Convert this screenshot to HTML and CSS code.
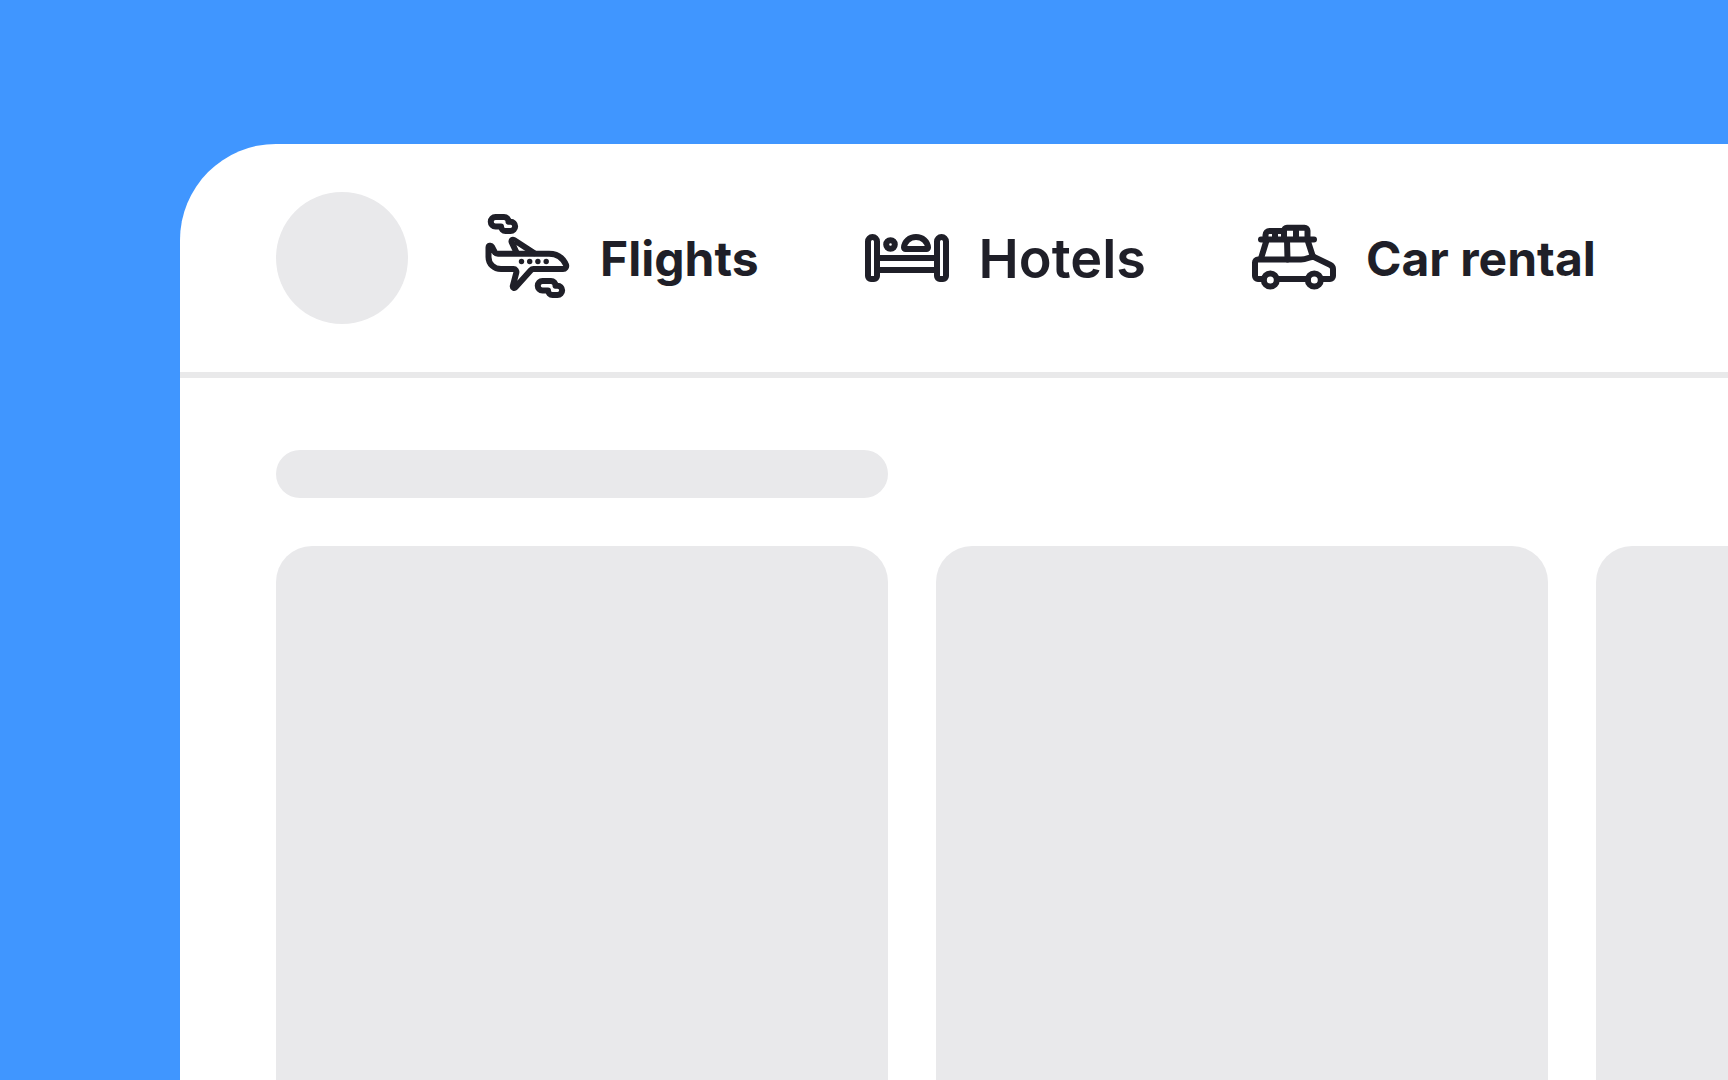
FILE: index.html
```html
<!DOCTYPE html>
<html lang="en">
<head>
    <meta charset="UTF-8">
    <meta name="viewport" content="width=device-width, initial-scale=1.0">
    <title>Travel</title>
    <link rel="stylesheet" href="styles.css">
</head>
<body>
    <div class="window">
        <header class="header">
            <div class="logo"></div>
            <nav class="nav">
                <a class="nav-link" href="#">
                    <svg class="icon" viewBox="0 0 96 96" aria-hidden="true">
                        <path d="M15.500 7h8.500a4.500 4.500 0 0 1 4.500 4.700h2a4.600 4.600 0 0 1 0 9.300h-5a4.500 4.500 0 0 1-4.500-4.500h-5.500a4.700 4.700 0 0 1 0-9.500z"/>
                        <path d="M62.500 71H71a4.500 4.500 0 0 1 4.500 4.700h2a4.600 4.600 0 0 1 0 9.300h-5a4.500 4.500 0 0 1-4.500-4.500h-5.500a4.700 4.700 0 0 1 0-9.500z"/>
                        <path d="M8.500 37.500a1.800 1.800 0 0 1 3.400-.8l2.600 5a4 4 0 0 0 3.500 2H69c8 0 14 4.500 17 11 .8 2.300-.8 4.300-3 4.300H53.500c-1.200 0-2 .4-2.700 1.200L35.500 77.300c-1.200 1.300-3 .4-2.700-1.300l3.500-13.200c.5-2-.8-3.800-2.800-3.800H21C14 59 8.500 54 8.500 47z"/>
                        <path d="M36.500 42.500l-4.800-10.300c-.7-1.800.8-3 2.300-2.100L54 43"/>
                        <g class="dots">
                            <circle cx="41.500" cy="51.500" r="2.700"/>
                            <circle cx="49.700" cy="51.500" r="2.700"/>
                            <circle cx="57.900" cy="51.500" r="2.700"/>
                            <circle cx="66.200" cy="51.500" r="2.700"/>
                        </g>
                    </svg>
                    <span class="label">Flights</span>
                </a>
                <a class="nav-link active" href="#">
                    <svg class="icon" viewBox="0 0 96 96" aria-hidden="true">
                        <path d="M9 31.500a4.500 4.500 0 0 1 9 0V66a3 3 0 0 1-3 3h-3a3 3 0 0 1-3-3z"/>
                        <path d="M78 31.500a4.500 4.500 0 0 1 9 0V66a3 3 0 0 1-3 3h-3a3 3 0 0 1-3-3z"/>
                        <circle cx="31.500" cy="34.500" r="4.300"/>
                        <path d="M45 37.500C45.500 31.500 50.500 27 57 27s11.500 4.500 12 10.500c0 .8-.7 1.500-1.500 1.500h-21c-.8 0-1.500-.7-1.500-1.500z"/>
                        <path d="M18 48h60M18 60h60"/>
                    </svg>
                    <span class="label">Hotels</span>
                </a>
                <a class="nav-link" href="#">
                    <svg class="icon" viewBox="0 0 96 96" aria-hidden="true">
                        <path d="M17.500 69H12a3 3 0 0 1-3-3V52.500a3 3 0 0 1 3-3h43c4.500 0 8-2 12-3l17 8.300c2 1 3 2.200 3 4.200v7a3 3 0 0 1-3 3h-9M31 69h31"/>
                        <circle cx="24.300" cy="70" r="6.500"/>
                        <circle cx="68.300" cy="70" r="6.500"/>
                        <path d="M15 29.500h53M20.500 30.500L15 48.500M41 29.500l.5 20M61.500 30l5.200 16"/>
                        <path d="M19.500 29v-4a4 4 0 0 1 4-4H38M29 21.500V29"/>
                        <path d="M38 29v-8.300a3 3 0 0 1 3-3h17.500a3 3 0 0 1 3 3V29M50 18v11"/>
                    </svg>
                    <span class="label">Car rental</span>
                </a>
            </nav>
        </header>
        <main class="content">
            <div class="title"></div>
            <div class="cards">
                <div class="card"></div>
                <div class="card"></div>
                <div class="card"></div>
            </div>
        </main>
    </div>
</body>
</html>
```
FILE: styles.css
```css
*{
    margin: 0;
    padding: 0;
    box-sizing: border-box;
}
body{
    height: 100vh;
    padding: 144px 0 0 180px;
    overflow: hidden;
    background: #4096ff;
    font-family: Inter, "Liberation Sans", sans-serif;
    color: #1f1f28;
}
.window{
    display: flex;
    flex-direction: column;
    height: 100%;
    overflow: hidden;
    background: #fff;
    border-top-left-radius: 96px;
}
.header{
    display: flex;
    align-items: center;
    gap: 72px;
    padding: 48px 96px;
    border-bottom: 6px solid #e9e9ea;
}
.logo{
    flex: none;
    width: 132px;
    height: 132px;
    border-radius: 50%;
    background: #e9e9eb;
}
.nav{
    display: flex;
    align-items: center;
    gap: 100px;
}
.nav-link{
    display: flex;
    align-items: center;
    gap: 24px;
    color: inherit;
    font-size: 48px;
    font-weight: 700;
    line-height: 72px;
    white-space: nowrap;
    text-decoration: none;
}
.nav-link.active{
    font-size: 54px;
    font-weight: 600;
}
.label{
    padding-top: 2px;
}
.icon{
    flex: none;
    width: 96px;
    height: 96px;
    fill: none;
    stroke: currentColor;
    stroke-width: 6;
    stroke-linecap: round;
    stroke-linejoin: round;
}
.dots{
    fill: currentColor;
    stroke: none;
}
.content{
    flex: 1;
    display: flex;
    flex-direction: column;
    gap: 48px;
    padding: 72px 0 0 96px;
}
.title{
    width: 612px;
    height: 48px;
    border-radius: 24px;
    background: #e9e9eb;
}
.cards{
    flex: 1;
    display: flex;
    gap: 48px;
}
.card{
    flex: none;
    width: 612px;
    border-radius: 36px 36px 0 0;
    background: #e9e9eb;
}
```
